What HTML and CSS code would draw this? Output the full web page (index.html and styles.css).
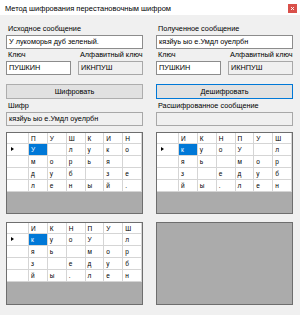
FILE: index.html
```html
<!DOCTYPE html>
<html>
<head>
<meta charset="utf-8">
<link rel="stylesheet" href="styles.css">
</head>
<body>
<div class="window">
  <div class="titlebar">
    <span class="title">Метод шифрования перестановочным шифром</span>
    <span class="close"><svg width="9" height="9" viewBox="0 0 9 9"><path d="M3 3 L6 6 M6 3 L3 6" stroke="#fff" stroke-width="0.9"/></svg></span>
  </div>
  <div class="content">
    <div class="col">
      <div class="label">Исходное сообщение</div>
      <div class="box">У лукоморья дуб зеленый.</div>
      <div class="keys">
        <div class="keycol">
          <div class="label">Ключ</div>
          <div class="box">ПУШКИН</div>
        </div>
        <div class="keycol">
          <div class="label">Алфавитный ключ</div>
          <div class="box ro">ИКНПУШ</div>
        </div>
      </div>
      <div class="btn">Шифровать</div>
      <div class="label">Шифр</div>
      <div class="box ro">кязйуь ыо е.Умдл оуелрбн</div>
      <div class="grid">
        <div class="rows">
          <div class="c rh"></div><div class="c">П</div><div class="c">У</div><div class="c">Ш</div><div class="c">К</div><div class="c">И</div><div class="c">Н</div>
          <div class="c rh"><span class="arrow"></span></div><div class="c sel">У</div><div class="c"></div><div class="c">л</div><div class="c">у</div><div class="c">к</div><div class="c">о</div>
          <div class="c rh"></div><div class="c">м</div><div class="c">о</div><div class="c">р</div><div class="c">ь</div><div class="c">я</div><div class="c"></div>
          <div class="c rh"></div><div class="c">д</div><div class="c">у</div><div class="c">б</div><div class="c"></div><div class="c">з</div><div class="c">е</div>
          <div class="c rh"></div><div class="c">л</div><div class="c">е</div><div class="c">н</div><div class="c">ы</div><div class="c">й</div><div class="c">.</div>
        </div>
      </div>
      <div class="grid second">
        <div class="rows">
          <div class="c rh"></div><div class="c">И</div><div class="c">К</div><div class="c">Н</div><div class="c">П</div><div class="c">У</div><div class="c">Ш</div>
          <div class="c rh"><span class="arrow"></span></div><div class="c sel">к</div><div class="c">у</div><div class="c">о</div><div class="c">У</div><div class="c"></div><div class="c">л</div>
          <div class="c rh"></div><div class="c">я</div><div class="c">ь</div><div class="c"></div><div class="c">м</div><div class="c">о</div><div class="c">р</div>
          <div class="c rh"></div><div class="c">з</div><div class="c"></div><div class="c">е</div><div class="c">д</div><div class="c">у</div><div class="c">б</div>
          <div class="c rh"></div><div class="c">й</div><div class="c">ы</div><div class="c">.</div><div class="c">л</div><div class="c">е</div><div class="c">н</div>
        </div>
      </div>
    </div>
    <div class="col">
      <div class="label">Полученное сообщение</div>
      <div class="box">кязйуь ыо е.Умдл оуелрбн</div>
      <div class="keys">
        <div class="keycol">
          <div class="label">Ключ</div>
          <div class="box">ПУШКИН</div>
        </div>
        <div class="keycol">
          <div class="label">Алфавитный ключ</div>
          <div class="box ro">ИКНПУШ</div>
        </div>
      </div>
      <div class="btn focus">Дешифровать</div>
      <div class="label">Расшифрованное сообщение</div>
      <div class="box ro"></div>
      <div class="grid">
        <div class="rows">
          <div class="c rh"></div><div class="c">И</div><div class="c">К</div><div class="c">Н</div><div class="c">П</div><div class="c">У</div><div class="c">Ш</div>
          <div class="c rh"><span class="arrow"></span></div><div class="c sel">к</div><div class="c">у</div><div class="c">о</div><div class="c">У</div><div class="c"></div><div class="c">л</div>
          <div class="c rh"></div><div class="c">я</div><div class="c">ь</div><div class="c"></div><div class="c">м</div><div class="c">о</div><div class="c">р</div>
          <div class="c rh"></div><div class="c">з</div><div class="c"></div><div class="c">е</div><div class="c">д</div><div class="c">у</div><div class="c">б</div>
          <div class="c rh"></div><div class="c">й</div><div class="c">ы</div><div class="c">.</div><div class="c">л</div><div class="c">е</div><div class="c">н</div>
        </div>
      </div>
      <div class="grid second"></div>
    </div>
  </div>
</div>
</body>
</html>
```
FILE: styles.css
```css
html, body {
  margin: 0;
  padding: 0;
}
body {
  width: 300px;
  height: 315px;
  background: #f0f0f0;
  font-family: "Liberation Sans", Arial, sans-serif;
  font-size: 7.3px;
  color: #000;
  overflow: hidden;
}
.window {
  width: 300px;
  height: 315px;
}
.titlebar {
  height: 15px;
  background: #fff;
  display: flex;
  align-items: center;
  justify-content: space-between;
  padding: 0 3px 0 5px;
}
.title {
  font-size: 7.5px;
  padding-top: 2px;
}
.close {
  width: 9px;
  height: 9px;
  background: #d9504a;
  display: flex;
  margin-top: 2px;
}
.content {
  display: flex;
  gap: 13px;
  padding: 8px 6px 0 6px;
}
.col {
  width: 137px;
  display: flex;
  flex-direction: column;
}
.label {
  height: 12px;
  line-height: 12px;
  padding-left: 2px;
  white-space: nowrap;
}
.box {
  line-height: 12px;
  border: 1px solid #8c8c8c;
  background: #fff;
  padding-left: 2px;
  box-sizing: border-box;
  height: 14px;
  white-space: nowrap;
  overflow: hidden;
}
.box.ro {
  background: #f0f0f0;
  border-color: #a8a8a8;
}
.keys {
  display: flex;
  justify-content: space-between;
}
.keycol {
  width: 65px;
  display: flex;
  flex-direction: column;
}
.btn {
  margin-top: 9px;
  height: 15px;
  box-sizing: border-box;
  border: 1px solid #adadad;
  background: #e1e1e1;
  text-align: center;
  line-height: 13px;
  margin-bottom: 1px;
}
.btn.focus {
  border: 1px solid #0078d7;
}
.grid {
  margin-top: 6px;
  height: 82px;
  box-sizing: border-box;
  border: 1px solid #6e6e6e;
  background: #ababab;
}
.grid.second {
  margin-top: 8px;
  height: 83px;
}
.rows {
  display: grid;
  grid-template-columns: 22px repeat(6, 1fr);
  grid-template-rows: 11px repeat(4, 12px);
  background: #fff;
}
.c {
  border-right: 1px solid #d5d5d5;
  border-bottom: 1px solid #d5d5d5;
  padding-left: 2px;
  line-height: 11px;
  font-size: 6.5px;
  overflow: hidden;
  white-space: nowrap;
}
.c.sel {
  background: #0078d7;
  color: #fff;
}
.c.rh {
  position: relative;
}
.arrow {
  position: absolute;
  left: 4px;
  top: 3px;
  width: 0;
  height: 0;
  border-top: 2.5px solid transparent;
  border-bottom: 2.5px solid transparent;
  border-left: 3px solid #000;
}
```
